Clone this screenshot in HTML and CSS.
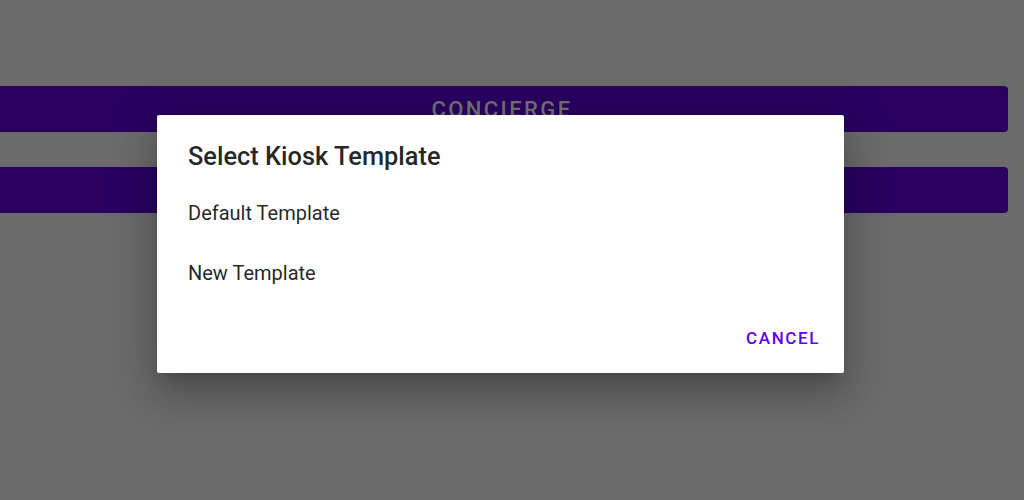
FILE: index.html
```html
<!DOCTYPE html>
<html>
<head>
<meta charset="utf-8">
<link rel="stylesheet" href="styles.css">
</head>
<body>
<main class="screen">
  <div class="btn">CONCIERGE</div>
  <div class="btn"></div>
</main>
<div class="dialog">
  <h2 class="title">Select Kiosk Template</h2>
  <ul class="list">
    <li class="item">Default Template</li>
    <li class="item">New Template</li>
  </ul>
  <div class="actions">
    <button class="cancel">CANCEL</button>
  </div>
</div>
</body>
</html>
```
FILE: styles.css
```css
html, body {
  margin: 0;
  padding: 0;
  width: 1024px;
  height: 500px;
  overflow: hidden;
  background: #6b6b6b;
  font-family: Roboto, "Noto Sans", sans-serif;
}
.screen {
  display: flex;
  flex-direction: column;
  gap: 35px;
  padding-top: 86px;
  margin-left: -20px;
  width: 1028px;
}
.btn {
  height: 46px;
  background: #290060;
  border-radius: 4px;
  color: #727272;
  font-size: 22px;
  font-weight: 500;
  letter-spacing: 2.4px;
  display: flex;
  align-items: center;
  justify-content: center;
  padding-left: 16px;
  box-sizing: border-box;
}
.dialog {
  position: absolute;
  left: 157px;
  top: 115px;
  width: 687px;
  height: 258px;
  background: #fff;
  border-radius: 2px;
  box-shadow: 0 11px 15px -7px rgba(0,0,0,0.2), 0 24px 38px 3px rgba(0,0,0,0.14), 0 9px 46px 8px rgba(0,0,0,0.12);
  box-sizing: border-box;
  padding: 0 24px 0 31px;
  display: flex;
  flex-direction: column;
}
.title {
  margin: 0;
  padding-top: 26px;
  font-size: 25.4px;
  font-weight: 500;
  line-height: 30px;
  color: rgba(0,0,0,0.87);
}
.list {
  list-style: none;
  margin: 0;
  padding: 0;
  padding-top: 12px;
}
.item {
  height: 60px;
  line-height: 24px;
  display: flex;
  align-items: center;
  font-size: 20px;
  color: rgba(0,0,0,0.87);
}
.actions {
  display: flex;
  justify-content: flex-end;
  margin-top: auto;
  padding-bottom: 24px;
}
.cancel {
  background: none;
  border: none;
  padding: 0;
  font-family: Roboto, "Noto Sans", sans-serif;
  font-size: 17px;
  font-weight: 500;
  letter-spacing: 1.6px;
  color: #6200ee;
  line-height: 22px;
}
```
